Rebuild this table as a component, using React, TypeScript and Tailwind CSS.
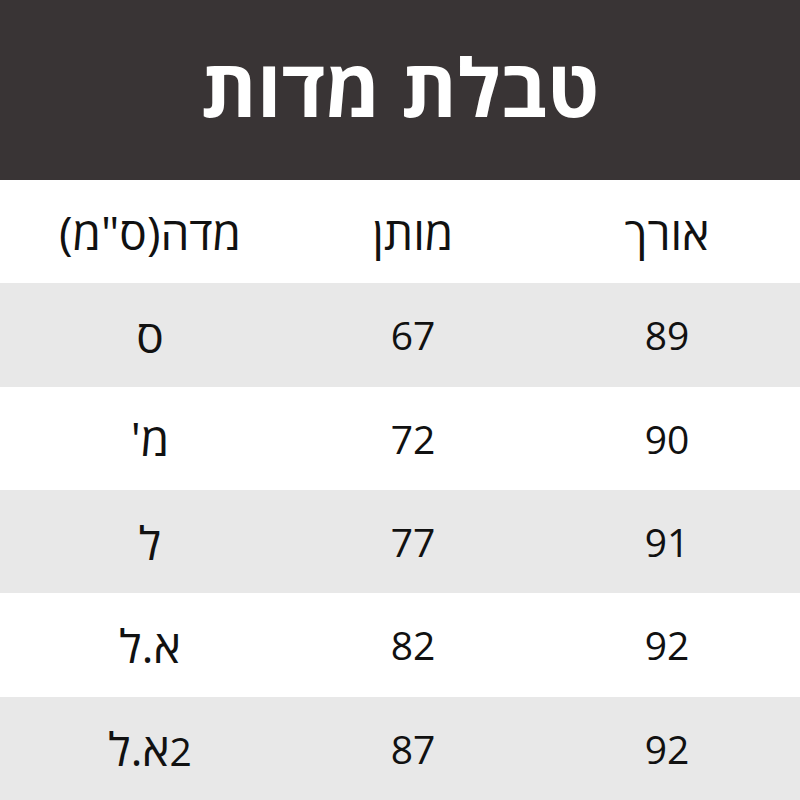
import React from 'react';

const rows = [
  { size: 'ס', waist: '67', length: '89' },
  { size: "מ'", waist: '72', length: '90' },
  { size: 'ל', waist: '77', length: '91' },
  { size: 'א.ל', waist: '82', length: '92' },
  { size: '2א.ל', waist: '87', length: '92' },
];

// Hebrew glyphs read larger in the reference than the digits do
function Cell({ text, className = '' }: { text: string; className?: string }) {
  const parts = text.split(/(\d+)/).filter(Boolean);
  return (
    <div dir="rtl" className={`text-center ${className}`}>
      {parts.map((p, i) =>
        /\d/.test(p) ? (
          <span key={i} className="text-[39px]">{p}</span>
        ) : (
          <span key={i} className="text-[46px]">{p}</span>
        )
      )}
    </div>
  );
}

function Row({ cells, gray }: { cells: [string, string, string]; gray: boolean }) {
  return (
    <div className={`grid grid-cols-[300px_226px_274px] items-center ${gray ? 'bg-[#e8e8e8]' : 'bg-white'}`}>
      <Cell text={cells[0]} />
      <Cell text={cells[1]} />
      <Cell text={cells[2]} className="pl-2" />
    </div>
  );
}

export default function App() {
  return (
    <div className="w-[800px] h-[800px] flex flex-col bg-white font-['Open_Sans','Noto_Sans',sans-serif]">
      {/* Header */}
      <header className="h-[180px] bg-[#393435] flex items-center justify-center">
        <h1 dir="rtl" className="text-white font-bold text-[80px] leading-none pb-2">טבלת מדות</h1>
      </header>

      {/* Table */}
      <div className="flex-1 grid grid-rows-6 text-[#111] leading-none">
        <Row cells={['מדה(ס"מ)', 'מותן', 'אורך']} gray={false} />
        {rows.map((r, i) => (
          <Row key={i} cells={[r.size, r.waist, r.length]} gray={i % 2 === 0} />
        ))}
      </div>
    </div>
  );
}
